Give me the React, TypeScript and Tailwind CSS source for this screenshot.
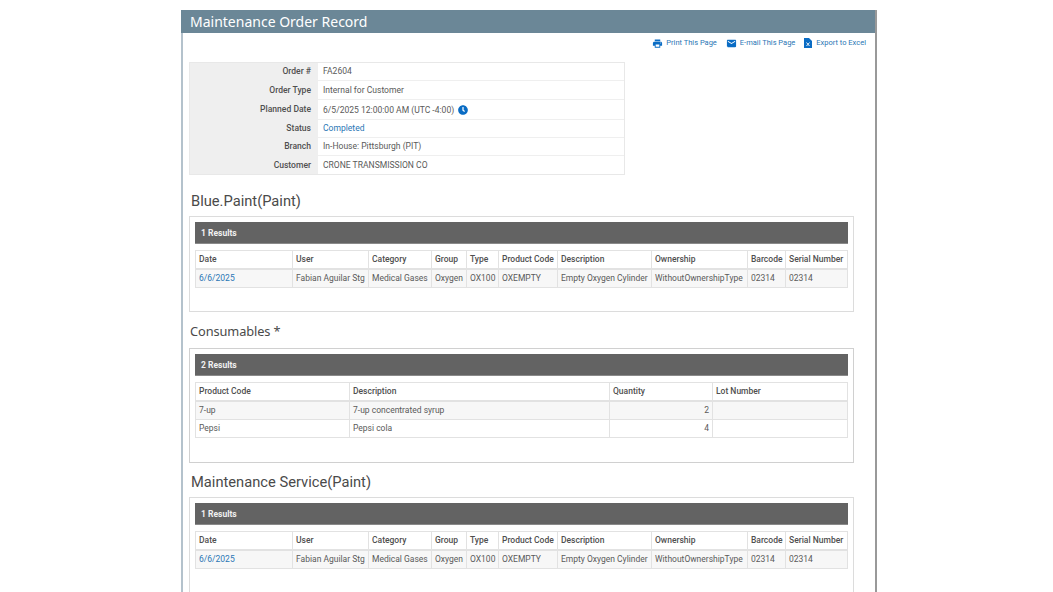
import { MdLocalPrintshop, MdEmail } from "react-icons/md";
import { FaClock } from "react-icons/fa";

const roboto = "font-['Roboto',sans-serif]";

const details: [string, React.ReactNode, string][] = [
  ["Order #", "FA2604", "h-[18px]"],
  ["Order Type", "Internal for Customer", "h-[19px]"],
  ["Planned Date", <span className="inline-flex items-center gap-[4px] pt-[1px]">6/5/2025 12:00:00 AM (UTC -4:00) <FaClock className="text-[#0a6cc4] text-[10px]" /></span>, "h-[20px]"],
  ["Status", <span className="text-[#2a76b5]">Completed</span>, "h-[18px]"],
  ["Branch", "In-House: Pittsburgh (PIT)", "h-[18px]"],
  ["Customer", <span className="pt-[1px]">CRONE TRANSMISSION CO</span>, "h-[18px]"],
];

const orderCols = [97, 76, 63, 35, 32, 59, 94, 96, 38, 62];
const orderHead = ["Date", "User", "Category", "Group", "Type", "Product Code", "Description", "Ownership", "Barcode", "Serial Number"];
const orderRow = ["6/6/2025", "Fabian Aguilar Stg", "Medical Gases", "Oxygen", "OX100", "OXEMPTY", "Empty Oxygen Cylinder", "WithoutOwnershipType", "02314", "02314"];

function Bar({ text }: { text: string }) {
  return (
    <div className="h-[22px] bg-[#636363] border-b border-[#8a8a8a] flex items-center pl-[6px] pt-[1px] text-[8.5px] font-bold text-[#f2f2f2]">
      {text}
    </div>
  );
}

function OrderTable() {
  return (
    <table className="table-fixed w-[652px] mt-[6px] border-collapse text-[8.5px] text-[#5a5a5a]">
      <colgroup>
        {orderCols.map((w, i) => (
          <col key={i} style={{ width: w }} />
        ))}
      </colgroup>
      <thead>
        <tr className="h-[18px] bg-white">
          {orderHead.map((h) => (
            <th key={h} className="border border-[#e2e2e2] border-b-2 pl-[3px] text-left font-medium text-[#4f4f4f] whitespace-nowrap overflow-hidden">
              {h}
            </th>
          ))}
        </tr>
      </thead>
      <tbody>
        <tr className="h-[19px] bg-[#f7f7f7]">
          {orderRow.map((c, i) => (
            <td key={i} className={`border border-[#e2e2e2] pl-[3px] whitespace-nowrap overflow-hidden ${i === 0 ? "text-[#2a76b5]" : ""}`}>
              {c}
            </td>
          ))}
        </tr>
      </tbody>
    </table>
  );
}

function ConsumablesTable() {
  return (
    <table className="table-fixed w-[652px] mt-[6px] border-collapse text-[8.5px] text-[#5a5a5a]">
      <colgroup>
        <col className="w-[154px]" />
        <col className="w-[260px]" />
        <col className="w-[103px]" />
        <col className="w-[135px]" />
      </colgroup>
      <thead>
        <tr className="h-[18px]">
          {["Product Code", "Description", "Quantity", "Lot Number"].map((h) => (
            <th key={h} className="border border-[#e2e2e2] border-b-2 pl-[3px] text-left font-medium text-[#4f4f4f]">
              {h}
            </th>
          ))}
        </tr>
      </thead>
      <tbody>
        <tr className="h-[19px] bg-[#f7f7f7]">
          <td className="border border-[#e2e2e2] pl-[3px]">7-up</td>
          <td className="border border-[#e2e2e2] pl-[3px]">7-up concentrated syrup</td>
          <td className="border border-[#e2e2e2] pr-[3px] text-right">2</td>
          <td className="border border-[#e2e2e2]"></td>
        </tr>
        <tr className="h-[18px]">
          <td className="border border-[#e2e2e2] pl-[3px]">Pepsi</td>
          <td className="border border-[#e2e2e2] pl-[3px]">Pepsi cola</td>
          <td className="border border-[#e2e2e2] pr-[3px] text-right">4</td>
          <td className="border border-[#e2e2e2]"></td>
        </tr>
      </tbody>
    </table>
  );
}

export default function App() {
  return (
    <div className={`h-screen overflow-hidden bg-white pt-[10px] ${roboto}`}>
      <div className="ml-[181px] w-[696px] h-[600px] border-l-2 border-[#b4c2cc] border-r-2 border-r-[#999999]">
        <div className="-ml-[2px] h-[23px] bg-[#6b8797] pl-[9px] flex items-center font-['Noto_Sans',sans-serif] text-[14px] text-white">
          Maintenance Order Record
        </div>

        <div className="h-[20px] pr-[9px] flex items-center justify-end gap-[9px] text-[7.5px] text-[#2a76b5]">
          <span className="flex items-center gap-[3px]"><MdLocalPrintshop className="text-[#0a6cc4] text-[11px]" />Print This Page</span>
          <span className="flex items-center gap-[3px]"><MdEmail className="text-[#0a6cc4] text-[11px]" />E-mail This Page</span>
          <span className="flex items-center gap-[4px]">
            <svg width="8" height="10" viewBox="0 0 8 10" fill="#0a6cc4">
              <path d="M0 0h5l3 3v7H0z" />
              <path d="M2.5 4.5l3 3.5M5.5 4.5l-3 3.5" stroke="#fff" strokeWidth="0.9" />
            </svg>
            Export to Excel
          </span>
        </div>

        <div className="ml-[6px] mt-[9px] w-[436px] border border-[#e8e8e8] text-[8.55px] text-[#5a5a5a]">
          {details.map(([k, v, h]) => (
            <div key={k} className={`flex ${h} border-b border-[#efefef] last:border-b-0`}>
              <div className="w-[128px] bg-[#efefef] pr-[7px] flex items-center justify-end font-medium text-[#4f4f4f]">{k}</div>
              <div className="pl-[5px] flex items-center">{v}</div>
            </div>
          ))}
        </div>

        <h2 className="ml-[8px] mt-[17px] h-[19px] leading-[19px] text-[14.7px] text-[#4a4a4a]">Blue.Paint(Paint)</h2>
        <div className="ml-[6px] mt-[5px] w-[665px] h-[96px] border border-[#dcdcdc] p-[5px]">
          <Bar text="1 Results" />
          <OrderTable />
        </div>

        <h2 className="ml-[7px] mt-[10px] h-[19px] leading-[19px] font-['Noto_Sans',sans-serif] text-[12.8px] tracking-[-0.1px] text-[#4a4a4a]">Consumables *</h2>
        <div className="ml-[6px] mt-[7px] w-[665px] h-[115px] border border-[#d0d0d0] p-[5px]">
          <Bar text="2 Results" />
          <ConsumablesTable />
        </div>

        <h2 className="ml-[8px] mt-[10px] h-[19px] leading-[19px] text-[14.7px] text-[#4a4a4a]">Maintenance Service(Paint)</h2>
        <div className="ml-[6px] mt-[5px] w-[665px] h-[120px] border border-[#dcdcdc] p-[5px]">
          <Bar text="1 Results" />
          <OrderTable />
        </div>
      </div>
    </div>
  );
}
